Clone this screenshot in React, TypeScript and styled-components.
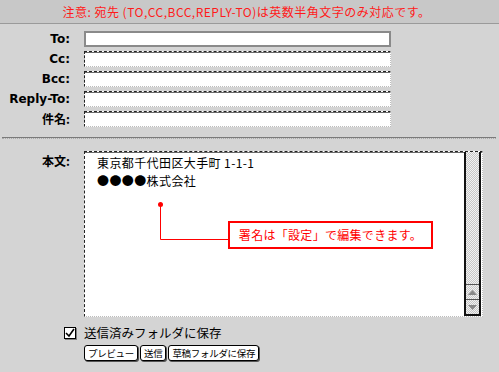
import React from "react";
import styled, { createGlobalStyle } from "styled-components";

const GlobalStyle = createGlobalStyle`
  html, body {
    margin: 0;
    padding: 0;
    background: #d4d4d4;
  }
  body {
    font-family: "Noto Sans CJK JP", "DejaVu Sans", sans-serif;
    font-size: 12px;
    color: #000;
  }
`;

const Page = styled.div`
  width: 499px;
  height: 372px;
  background: #d4d4d4;
  overflow: hidden;
`;

const Notice = styled.div`
  height: 23px;
  background: #c8c8c8;
  border-bottom: 1px solid #9a9a9a;
  color: #ff1a1a;
  font-size: 12px;
  line-height: 23px;
  text-align: center;
  padding-right: 6px;
  letter-spacing: 0.5px;
`;

const HeaderGrid = styled.div`
  display: grid;
  grid-template-columns: 70px 307px;
  column-gap: 14px;
  row-gap: 4px;
  padding-top: 7px;
`;

const Label = styled.label`
  font-family: "DejaVu Sans", sans-serif;
  font-weight: bold;
  font-size: 12px;
  text-align: right;
  line-height: 16px;
  white-space: nowrap;
`;

const JpLabel = styled(Label)`
  font-family: "Noto Sans CJK JP", sans-serif;
`;

const Field = styled.input<{ $focused?: boolean }>`
  box-sizing: border-box;
  height: 16px;
  width: 307px;
  margin: 0;
  padding: 0 2px;
  background: #fff;
  outline: none;
  font-size: 12px;
  border-top: ${({ $focused }) => ($focused ? "2px solid #8a8a8a" : "1px dashed #222")};
  border-left: ${({ $focused }) => ($focused ? "2px solid #8a8a8a" : "1px dashed #222")};
  border-right: ${({ $focused }) => ($focused ? "2px solid #8a8a8a" : "1px dotted #bcbcbc")};
  border-bottom: ${({ $focused }) => ($focused ? "2px solid #8a8a8a" : "1px dotted #bcbcbc")};
  box-shadow: ${({ $focused }) => ($focused ? "none" : "inset 0 1px 0 #6a6a6a")};
`;

const Divider = styled.hr`
  margin: 10px 3px 0 2px;
  border: none;
  border-top: 1px solid #7a7a7a;
  border-bottom: 1px dotted #aaa;
  height: 0;
`;

const BodySection = styled.div`
  display: grid;
  grid-template-columns: 70px 399px;
  column-gap: 14px;
  padding-top: 12px;
`;

const BodyLabel = styled(JpLabel)`
  padding-top: 2px;
`;

const TextArea = styled.div`
  position: relative;
  box-sizing: border-box;
  height: 166px;
  display: flex;
  background: #fff;
  border-top: 1px dashed #222;
  border-left: 1px dashed #222;
  border-bottom: 1px dotted #bcbcbc;
  border-right: 1px dotted #bcbcbc;
  box-shadow: inset 0 1px 0 #6a6a6a;
`;

const TextContent = styled.div`
  flex: 1;
  padding: 2px 0 0 12px;
  font-size: 12px;
  line-height: 18px;
  white-space: pre;
  letter-spacing: 0.4px;
`;

const ScrollBar = styled.div`
  width: 13px;
  margin-right: 1px;
  display: flex;
  flex-direction: column;
  border-left: 2px solid #111;
  border-right: 2px solid #111;
  border-bottom: 2px solid #111;
  background: repeating-conic-gradient(#c6c6c6 0 25%, #f2f2f2 0 50%) 0 0 / 2px 2px;
`;

const Track = styled.div`
  flex: 1;
`;

const Arrow = styled.div`
  height: 14px;
  border-top: 1px solid #555;
  display: flex;
  align-items: center;
  justify-content: center;
`;

const Callout = styled.svg`
  position: absolute;
  left: 0;
  top: 0;
  pointer-events: none;
`;

const Note = styled.div`
  position: absolute;
  left: 143px;
  top: 69px;
  width: 201px;
  height: 24px;
  border: 2px solid #ff0000;
  background: #fff;
  color: #ff0000;
  font-size: 12px;
  line-height: 24px;
  text-align: center;
  letter-spacing: 0.3px;
`;

const CheckRow = styled.div`
  display: flex;
  align-items: center;
  gap: 8px;
  margin: 9px 0 0 64px;
  font-size: 12.5px;
  line-height: 14px;
`;

const Check = styled.span`
  width: 12px;
  height: 12px;
  box-sizing: border-box;
  border: 1px solid #000;
  background: #fff;
  box-shadow: 1px 1px 0 #808080;
  display: flex;
  align-items: center;
  justify-content: center;
`;

const ButtonRow = styled.div`
  display: flex;
  gap: 2px;
  margin: 5px 0 0 84px;
`;

const Button = styled.button`
  height: 16px;
  padding: 0 3px;
  margin: 0;
  border: 1px solid #000;
  border-radius: 3px;
  background: #fff;
  box-shadow: 1px 1px 0 #555;
  font-family: "Noto Sans CJK JP", sans-serif;
  font-size: 9.5px;
  line-height: 13px;
  letter-spacing: -0.3px;
  color: #000;
  cursor: pointer;
`;

const fields = [
  { label: "To:", focused: true },
  { label: "Cc:" },
  { label: "Bcc:" },
  { label: "Reply-To:" },
];

export default function App() {
  return (
    <Page>
      <GlobalStyle />
      <Notice>注意: 宛先 (TO,CC,BCC,REPLY-TO)は英数半角文字のみ対応です。</Notice>

      <HeaderGrid>
        {fields.map((f) => (
          <React.Fragment key={f.label}>
            <Label>{f.label}</Label>
            <Field $focused={f.focused} />
          </React.Fragment>
        ))}
        <JpLabel>件名:</JpLabel>
        <Field />
      </HeaderGrid>

      <Divider />

      <BodySection>
        <BodyLabel>本文:</BodyLabel>
        <TextArea>
          <TextContent>
            {"東京都千代田区大手町 1-1-1\n●●●●株式会社"}
          </TextContent>
          <ScrollBar>
            <Track />
            <Arrow>
              <svg width="9" height="5" viewBox="0 0 9 5">
                <path d="M0 5 L4.5 0 L9 5 Z" fill="#888" />
              </svg>
            </Arrow>
            <Arrow>
              <svg width="9" height="5" viewBox="0 0 9 5">
                <path d="M0 0 L4.5 5 L9 0 Z" fill="#888" />
              </svg>
            </Arrow>
          </ScrollBar>
          <Callout width="150" height="100">
            <circle cx="75.5" cy="52.5" r="2.5" fill="#ff0000" />
            <polyline points="75.5,54 75.5,87.5 144,87.5" fill="none" stroke="#ff0000" strokeWidth="1" />
          </Callout>
          <Note>署名は「設定」で編集できます。</Note>
        </TextArea>
      </BodySection>

      <CheckRow>
        <Check>
          <svg width="10" height="10" viewBox="0 0 10 10">
            <path d="M1 5 L4 8 L9 1" fill="none" stroke="#000" strokeWidth="1.6" />
          </svg>
        </Check>
        <span>送信済みフォルダに保存</span>
      </CheckRow>

      <ButtonRow>
        <Button>プレビュー</Button>
        <Button>送信</Button>
        <Button>草稿フォルダに保存</Button>
      </ButtonRow>
    </Page>
  );
}
